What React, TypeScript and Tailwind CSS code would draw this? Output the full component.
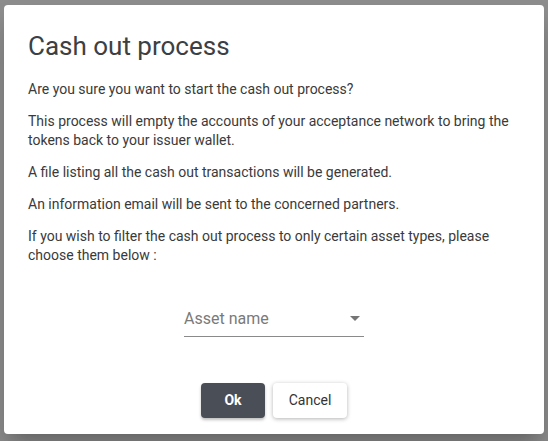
import React from 'react'

const paragraphs = [
  'Are you sure you want to start the cash out process?',
  'This process will empty the accounts of your acceptance network to bring the tokens back to your issuer wallet.',
  'A file listing all the cash out transactions will be generated.',
  'An information email will be sent to the concerned partners.',
  'If you wish to filter the cash out process to only certain asset types, please choose them below :',
]

function AssetSelect() {
  return (
    <div className="flex w-[180px] items-center justify-between border-b border-[#8a8a8a] pb-[8px] pt-[4px]">
      <span className="text-[16px] leading-[19px] text-[#7a7a7a]">Asset name</span>
      <svg width="10" height="5" viewBox="0 0 10 5" className="mr-[4px]">
        <path d="M0 0h10L5 5z" fill="#757575" />
      </svg>
    </div>
  )
}

export default function App() {
  return (
    <div
      className="h-[441px] w-[548px] overflow-hidden bg-[#8e8e8e] pl-[4px] pt-[5px]"
      style={{ fontFamily: 'Roboto, "Liberation Sans", sans-serif' }}
    >
      <div className="flex h-[429px] w-[540px] flex-col rounded-[4px] bg-white shadow-[0_11px_15px_-7px_rgba(0,0,0,0.2),0_24px_38px_3px_rgba(0,0,0,0.14)]">
        <div className="px-[24px] pt-[25px]">
          <h2 className="text-[26px] font-normal leading-[32px] text-[#3c4043]">Cash out process</h2>
          <div className="mt-[18px] flex flex-col gap-[13px] text-[14px] leading-[19px] text-[#3a3a3a]">
            {paragraphs.map(p => (
              <p key={p}>{p}</p>
            ))}
          </div>
        </div>

        <div className="mt-[40px] flex justify-center">
          <AssetSelect />
        </div>

        <div className="mt-[46px] flex justify-center gap-[8px]">
          <button className="h-[35px] w-[64px] rounded-[4px] bg-[#4a4f57] text-[14px] font-bold text-white shadow-[0_2px_3px_rgba(0,0,0,0.25)]">
            Ok
          </button>
          <button className="h-[35px] w-[74px] rounded-[4px] bg-white text-[14px] text-[#333] shadow-[0_1px_4px_rgba(0,0,0,0.3)]">
            Cancel
          </button>
        </div>
      </div>
    </div>
  )
}
